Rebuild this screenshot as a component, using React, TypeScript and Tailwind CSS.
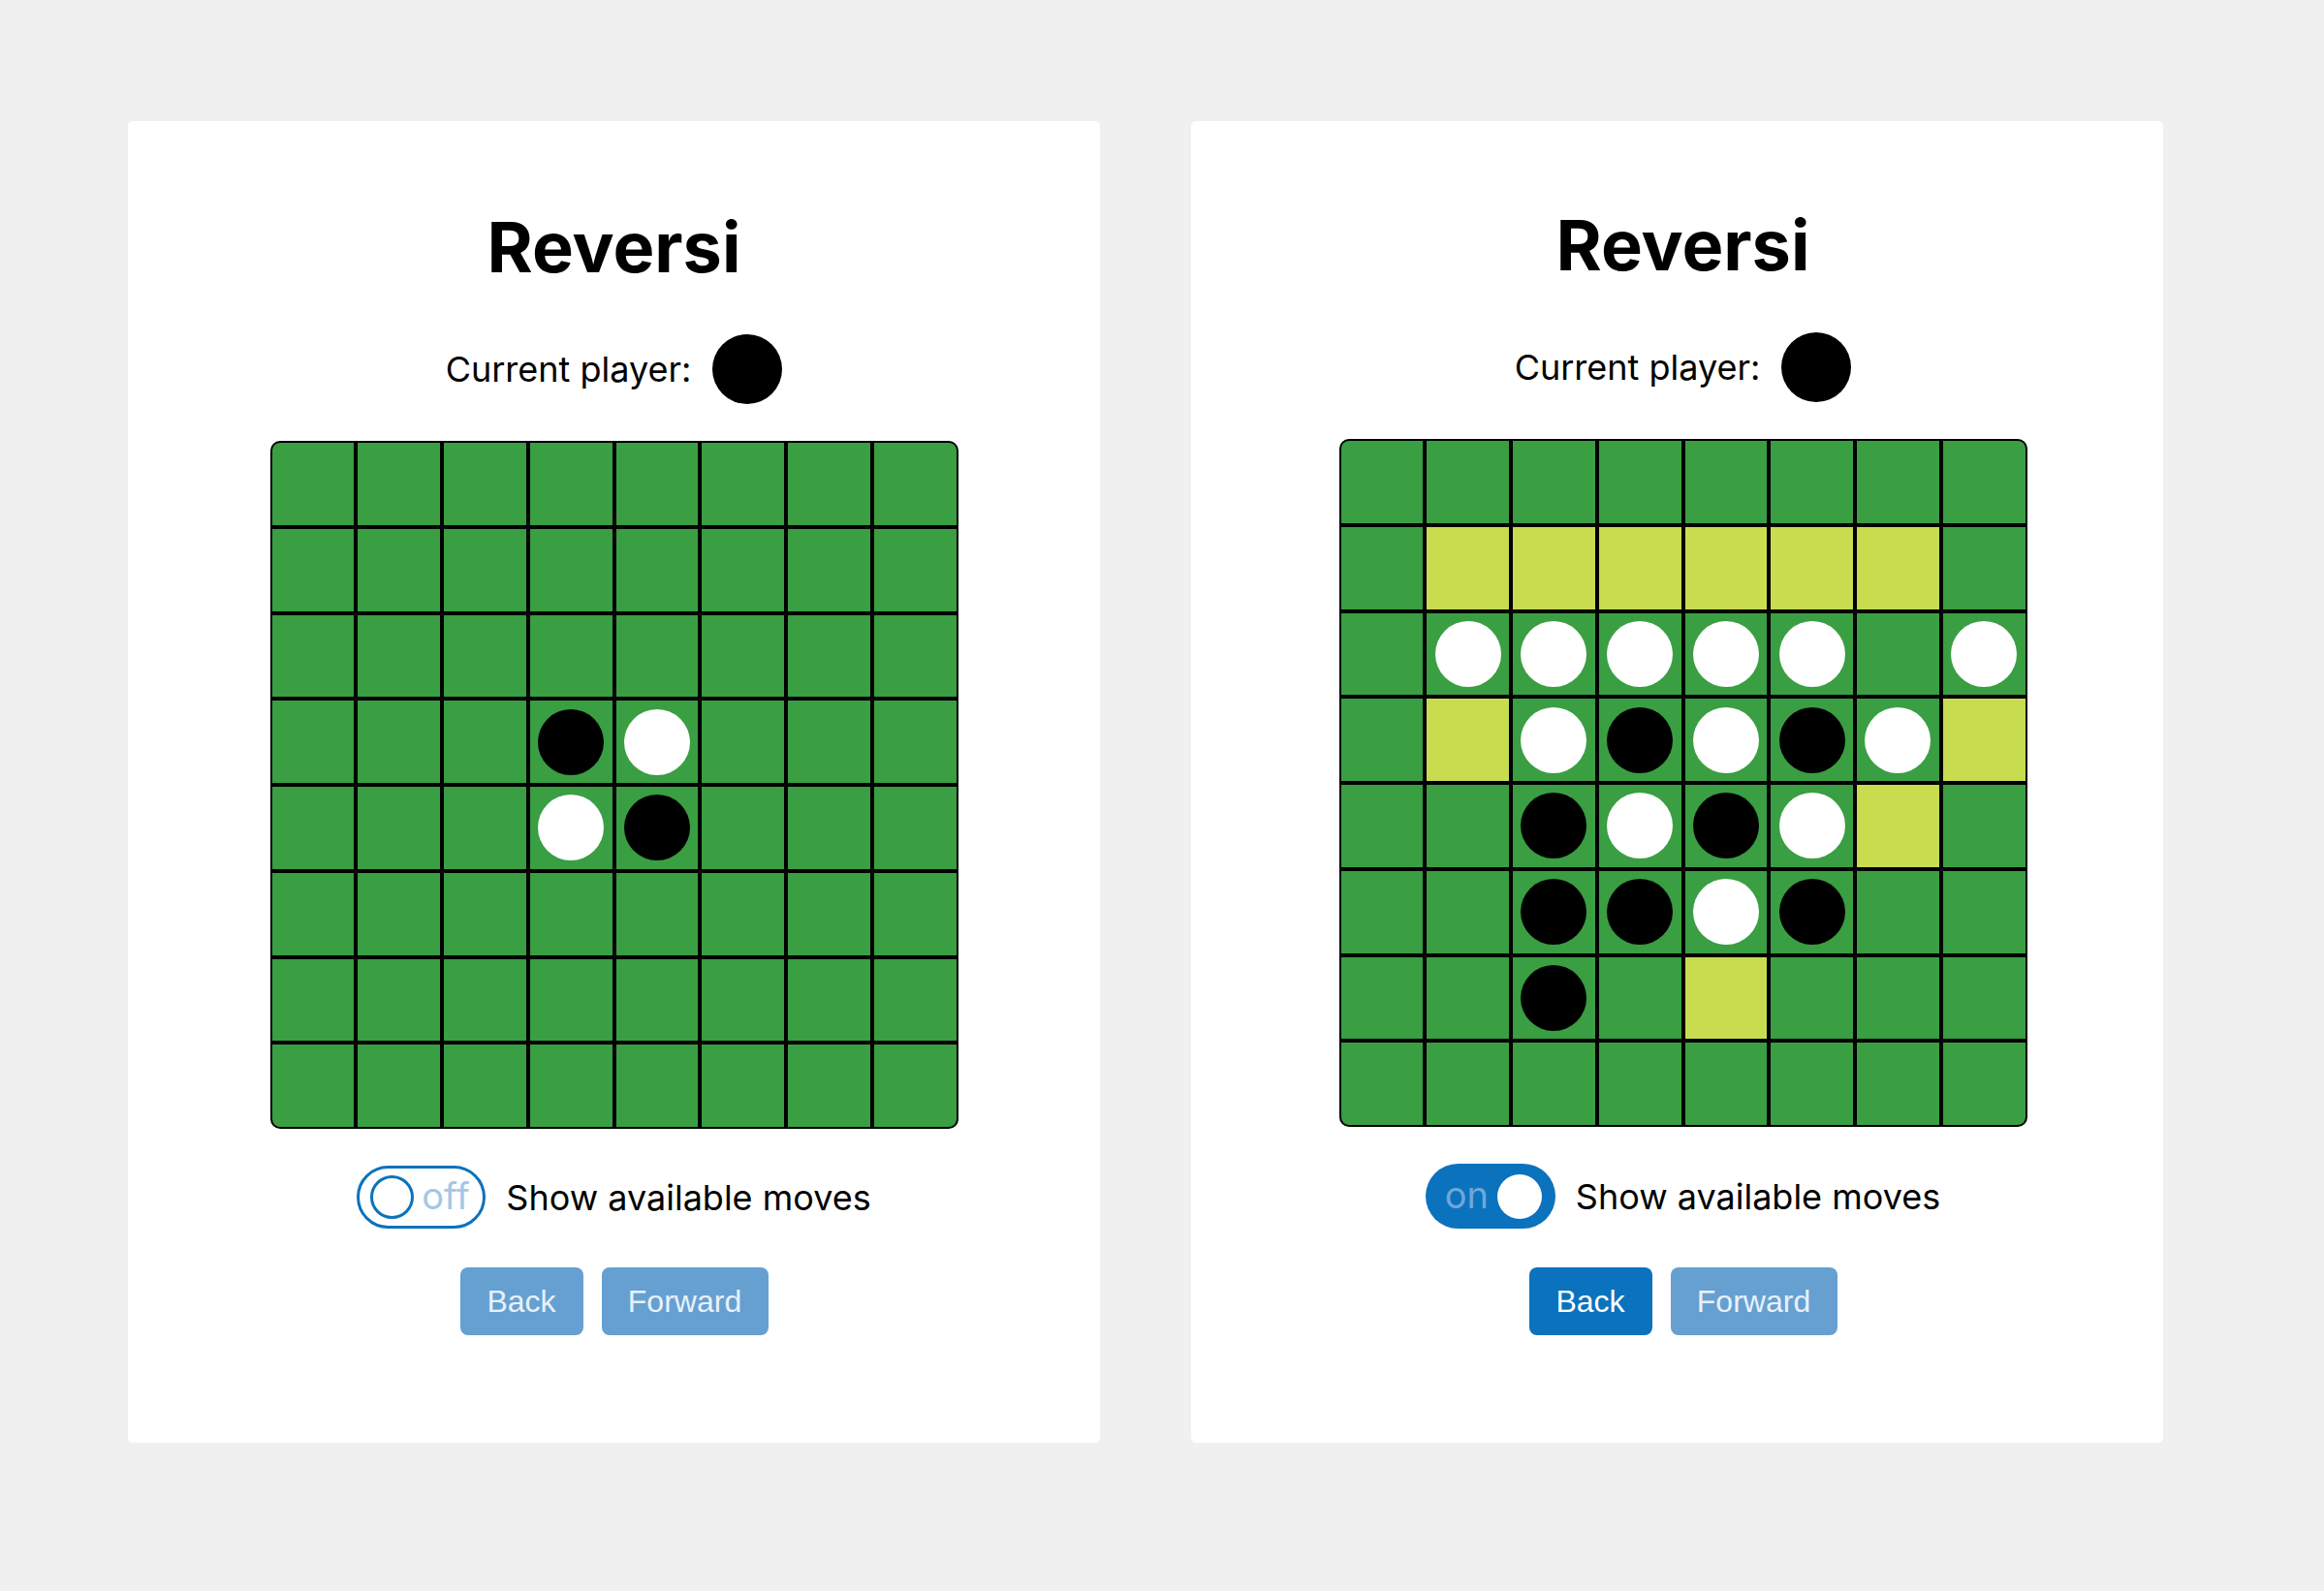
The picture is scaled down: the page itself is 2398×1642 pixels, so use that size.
import React from "react";

const leftBoard = [
  "gggggggg",
  "gggggggg",
  "gggggggg",
  "gggbwggg",
  "gggwbggg",
  "gggggggg",
  "gggggggg",
  "gggggggg",
];

const rightBoard = [
  "gggggggg",
  "gyyyyyyg",
  "gwwwwwgw",
  "gywbwbwy",
  "ggbwbwyg",
  "ggbbwbgg",
  "ggbgyggg",
  "gggggggg",
];

function Cell({ c }: { c: string }) {
  return (
    <div
      className={
        c === "y"
          ? "bg-[#c8dc50] flex items-center justify-center"
          : "bg-[#3a9e42] flex items-center justify-center"
      }
    >
      {c === "b" && <div className="w-[68px] h-[68px] rounded-full bg-black" />}
      {c === "w" && <div className="w-[68px] h-[68px] rounded-full bg-white" />}
    </div>
  );
}

function Board({ rows }: { rows: string[] }) {
  return (
    <div className="w-[710px] h-[710px] bg-black border-2 border-black rounded-[10px] overflow-hidden grid grid-cols-8 grid-rows-8 gap-[4px]">
      {rows.flatMap((r, i) => r.split("").map((c, j) => <Cell key={i + "-" + j} c={c} />))}
    </div>
  );
}

function ToggleOff() {
  return (
    <div className="w-[133px] h-[65px] rounded-full border-[3px] border-[#0b72bd] bg-white flex items-center">
      <div className="ml-[11px] w-[45px] h-[45px] rounded-full border-[3px] border-[#0b72bd] bg-white" />
      <span className="ml-[8px] text-[38px] leading-none text-[#a3c7e8] mb-[3px]">off</span>
    </div>
  );
}

function ToggleOn() {
  return (
    <div className="w-[134px] h-[67px] rounded-full bg-[#0b72bd] flex items-center">
      <span className="ml-[20px] text-[38px] leading-none text-[#6fa7d9] mb-[3px]">on</span>
      <div className="ml-auto mr-[14px] w-[46px] h-[46px] rounded-full bg-white" />
    </div>
  );
}

function Card({ right }: { right?: boolean }) {
  return (
    <div
      className={
        right
          ? "w-[1003px] bg-white rounded-[5px] flex flex-col items-center pt-[92px] pl-[12px]"
          : "w-[1003px] bg-white rounded-[5px] flex flex-col items-center pt-[94px] pb-[111px]"
      }
    >
      <h1 className="text-[72px] leading-none font-bold text-black">Reversi</h1>
      <div className="mt-[54px] flex items-center">
        <span className="text-[36px] text-black">Current player:</span>
        <div className="ml-[22px] w-[72px] h-[72px] rounded-full bg-black" />
      </div>
      <div className="mt-[38px]">
        <Board rows={right ? rightBoard : leftBoard} />
      </div>
      <div className="mt-[38px] flex items-center">
        {right ? <ToggleOn /> : <ToggleOff />}
        <span className="ml-[21px] text-[36px] text-black">Show available moves</span>
      </div>
      <div className="mt-[40px] flex gap-[19px] font-['Liberation_Sans',Arial,sans-serif]">
        <button
          className={
            right
              ? "w-[127px] h-[70px] rounded-[8px] bg-[#0b72bd] text-white text-[32px]"
              : "w-[127px] h-[70px] rounded-[8px] bg-[#66a0d1] text-[#e8f1fb] text-[32px]"
          }
        >
          Back
        </button>
        <button className="w-[172px] h-[70px] rounded-[8px] bg-[#66a0d1] text-[#e8f1fb] text-[32px]">
          Forward
        </button>
      </div>
    </div>
  );
}

export default function App() {
  return (
    <div className="min-h-screen bg-[#f0f0f0] font-[Inter,sans-serif] flex items-start pl-[132px] pt-[125px]">
      <div className="flex items-stretch gap-[94px]">
        <Card />
        <Card right />
      </div>
    </div>
  );
}
